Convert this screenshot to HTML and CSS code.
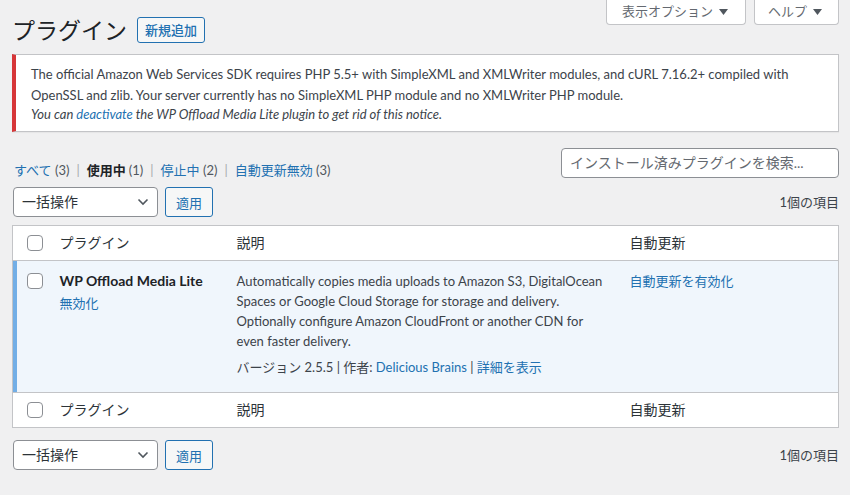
FILE: index.html
```html
<!DOCTYPE html>
<html lang="ja">
<head>
<meta charset="utf-8">
<title>プラグイン</title>
<link rel="stylesheet" href="styles.css">
</head>
<body>
<div class="page">
  <div class="top">
    <div class="title-row">
      <h1 class="title">プラグイン</h1>
      <a class="btn-add" href="#">新規追加</a>
    </div>
    <div class="meta-tabs">
      <button class="meta-tab">表示オプション <svg class="tri" width="9" height="6" viewBox="0 0 9 6"><polygon points="0,0 9,0 4.5,6" fill="#50575e"/></svg></button>
      <button class="meta-tab help">ヘルプ <svg class="tri" width="9" height="6" viewBox="0 0 9 6"><polygon points="0,0 9,0 4.5,6" fill="#50575e"/></svg></button>
    </div>
  </div>

  <div class="notice">
    <p class="notice-main">The official Amazon Web Services SDK requires PHP 5.5+ with SimpleXML and XMLWriter modules, and cURL 7.16.2+ compiled with OpenSSL and zlib. Your server currently has no SimpleXML PHP module and no XMLWriter PHP module.</p>
    <p class="notice-sub"><em>You can <a href="#">deactivate</a> the WP Offload Media Lite plugin to get rid of this notice.</em></p>
  </div>

  <div class="filters">
    <ul class="subsub">
      <li><a href="#">すべて <span class="count">(3)</span></a><span class="sep">|</span></li>
      <li><a href="#" class="current">使用中 <span class="count">(1)</span></a><span class="sep">|</span></li>
      <li><a href="#">停止中 <span class="count">(2)</span></a><span class="sep">|</span></li>
      <li><a href="#">自動更新無効 <span class="count">(3)</span></a></li>
    </ul>
    <div class="search">インストール済みプラグインを検索...</div>
  </div>

  <div class="tablenav">
    <div class="actions">
      <div class="select"><span>一括操作</span><svg width="12" height="8" viewBox="0 0 12 8"><polyline points="1.5,1.5 6,6 10.5,1.5" fill="none" stroke="#50575e" stroke-width="1.6"/></svg></div>
      <button class="btn">適用</button>
    </div>
    <div class="num">1個の項目</div>
  </div>

  <table class="plugins">
    <colgroup>
      <col class="c-check"><col class="c-name"><col class="c-desc"><col class="c-auto">
    </colgroup>
    <thead>
      <tr>
        <th class="check"><input type="checkbox"></th>
        <th>プラグイン</th>
        <th class="desc-h">説明</th>
        <th class="auto-h">自動更新</th>
      </tr>
    </thead>
    <tbody>
      <tr class="active">
        <th class="check"><input type="checkbox"></th>
        <td class="name">
          <strong>WP Offload Media Lite</strong>
          <div class="row-actions"><a href="#">無効化</a></div>
        </td>
        <td class="desc">
          <p>Automatically copies media uploads to Amazon S3, DigitalOcean Spaces or Google Cloud Storage for storage and delivery. Optionally configure Amazon CloudFront or another CDN for even faster delivery.</p>
          <div class="meta">バージョン 2.5.5 | 作者: <a href="#">Delicious Brains</a> | <a href="#">詳細を表示</a></div>
        </td>
        <td class="auto"><a href="#">自動更新を有効化</a></td>
      </tr>
    </tbody>
    <tfoot>
      <tr>
        <th class="check"><input type="checkbox"></th>
        <th>プラグイン</th>
        <th class="desc-h">説明</th>
        <th class="auto-h">自動更新</th>
      </tr>
    </tfoot>
  </table>

  <div class="tablenav bottom">
    <div class="actions">
      <div class="select"><span>一括操作</span><svg width="12" height="8" viewBox="0 0 12 8"><polyline points="1.5,1.5 6,6 10.5,1.5" fill="none" stroke="#50575e" stroke-width="1.6"/></svg></div>
      <button class="btn">適用</button>
    </div>
    <div class="num">1個の項目</div>
  </div>
</div>
</body>
</html>
```

FILE: styles.css
```css
* { box-sizing: border-box; }
html, body { margin: 0; padding: 0; }
body {
  background: #f0f0f1;
  font-family: Lato, "Noto Sans CJK JP", sans-serif;
  font-size: 13px;
  color: #3c434a;
  line-height: 1.4;
}
a { color: #2271b1; text-decoration: none; }
.page { padding: 0 11px 0 12px; }

.top { display: flex; justify-content: space-between; align-items: flex-start; }
.title-row { display: flex; align-items: center; gap: 10px; padding-top: 15px; }
.title { margin: 0; font-size: 23px; font-weight: 400; line-height: 30px; color: #1d2327; }
.btn-add {
  display: inline-block;
  height: 26px; line-height: 24px;
  padding: 0 7px;
  border: 1px solid #2271b1; border-radius: 3px;
  background: #f6f7f7; color: #2271b1;
  font-size: 13px; font-weight: 500;
}

.meta-tabs { display: flex; gap: 8px; }
.meta-tab {
  display: flex; align-items: center; gap: 6px;
  height: 25px;
  padding: 0 17px 1px 15px;
  line-height: 1;
  background: #fff;
  border: 1px solid #c3c4c7; border-top: none;
  border-radius: 0 0 4px 4px;
  font-family: inherit; font-size: 13px; color: #646970;
}
.meta-tab.help { padding: 0 16px 1px 13px; }
.tri { display: block; }

.notice {
  margin-top: 9px;
  background: #fff;
  border: 1px solid #c3c4c7;
  border-left: 4px solid #d63638;
  padding: 9px 12px 9px 15px;
  box-shadow: 0 1px 1px rgba(0,0,0,.04);
}
.notice p { margin: 0; }
.notice-main { line-height: 21px; }
.notice-sub { line-height: 16px; }

.filters { display: flex; justify-content: space-between; align-items: flex-start; margin-top: 16px; height: 30px; }
.subsub { list-style: none; margin: 12px 0 0 2px; padding: 0; display: flex; line-height: 20px; color: #646970; }
.subsub a { color: #2271b1; }
.subsub a.current { color: #1d2327; font-weight: 700; }
.subsub .count { color: #50575e; font-weight: 400; }
.subsub .sep { color: #a7aaad; padding: 0 7px; }
.search {
  width: 278px; height: 30px;
  background: #fff;
  border: 1px solid #8c8f94; border-radius: 4px;
  padding: 0 8px;
  line-height: 28px;
  font-size: 14px; color: #646970;
}

.tablenav { display: flex; justify-content: space-between; align-items: center; margin-top: 9px; height: 30px; }
.tablenav.bottom { margin-top: 12px; }
.actions { display: flex; gap: 7px; align-items: center; margin-left: 1px; }
.select {
  width: 145px; height: 30px;
  display: flex; justify-content: space-between; align-items: center;
  padding: 0 8px 0 8px;
  background: #fff;
  border: 1px solid #8c8f94; border-radius: 4px;
  font-size: 14px; color: #2c3338;
}
.select svg { display: block; }
.btn {
  height: 30px; padding: 0 10px;
  background: #f6f7f7;
  border: 1px solid #2271b1; border-radius: 3px;
  color: #2271b1; font-family: inherit; font-size: 13px;
}
.num { color: #3c434a; font-size: 13px; }

.plugins {
  width: 100%;
  margin-top: 8px;
  border-collapse: collapse;
  table-layout: fixed;
  background: #fff;
  border: 1px solid #c3c4c7;
}
.c-check { width: 38px; }
.c-name { width: 176px; }
.c-desc { width: 393px; }
.plugins th, .plugins td { text-align: left; vertical-align: top; }
.plugins thead th, .plugins tfoot th {
  font-weight: 400; font-size: 14px; color: #2c3338;
  padding: 7px 10px 7px 9px; line-height: 20px; height: 35px;
}
.plugins thead tr { border-bottom: 1px solid #c3c4c7; }
.plugins tfoot tr { border-top: 1px solid #c3c4c7; }
.plugins .desc-h, .plugins .auto-h { padding-left: 10px; }
.plugins th.check { padding: 9px 0 0 14px; }
.plugins tbody th.check { padding-top: 12px; }
input[type=checkbox] {
  appearance: none; -webkit-appearance: none;
  display: block; margin: 0;
  width: 16px; height: 16px;
  border: 1px solid #8c8f94; border-radius: 4px;
  background: #fff;
}
tr.active { background: #f0f6fc; }
tr.active th.check { box-shadow: inset 4px 0 0 #72aee6; }
tr.active td { padding: 10px 10px 15px; line-height: 20px; }
tr.active td.name { padding-left: 9px; }
.name strong { display: block; font-size: 14px; font-weight: 700; color: #1d2327; }
.row-actions { margin-top: 2px; }
.desc p { margin: 0; }
.desc .meta { margin-top: 6px; }
```
